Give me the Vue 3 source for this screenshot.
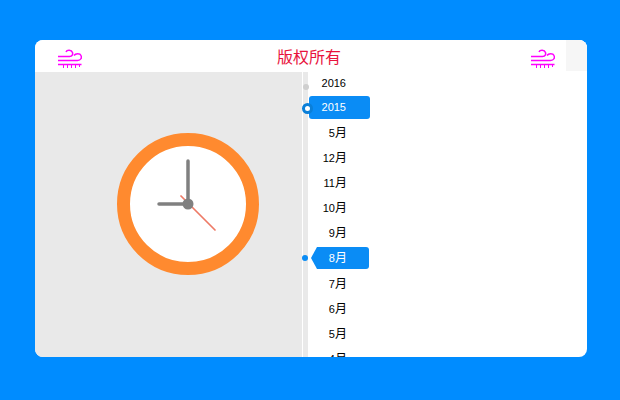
<script setup>
const rows = [
  { num: '2016', unit: '', kind: 'year' },
  { num: '2015', unit: '', kind: 'year year-on' },
  { num: '5', unit: '月', kind: '' },
  { num: '12', unit: '月', kind: '' },
  { num: '11', unit: '月', kind: '' },
  { num: '10', unit: '月', kind: '' },
  { num: '9', unit: '月', kind: '' },
  { num: '8', unit: '月', kind: 'month-on' },
  { num: '7', unit: '月', kind: '' },
  { num: '6', unit: '月', kind: '' },
  { num: '5', unit: '月', kind: '' },
  { num: '4', unit: '月', kind: '' },
]
</script>

<template>
  <div class="page">
    <div class="card">
      <header class="head">
        <svg class="wind" viewBox="0 0 24 20" fill="none" stroke="#f0f" stroke-width="1.500">
          <path d="M0 7.500H11.500C14.500 7.500 15 5 14.500 3.500C13.500.7 9 .5 8 3" />
          <path d="M0 11.500H19.500C23 11.500 24 8.500 23 6.500C22 4 17.500 4 16 6.500" />
          <path d="M0 15.500H23.500" />
          <path d="M5.500 15V19M9.500 15V19M13.500 15V19M17.500 15V19M21.500 15V18" stroke-width="1" />
        </svg>
        <h1 class="title">版权所有</h1>
        <div class="head-right">
          <svg class="wind" viewBox="0 0 24 20" fill="none" stroke="#f0f" stroke-width="1.500">
            <path d="M0 7.500H11.500C14.500 7.500 15 5 14.500 3.500C13.500.7 9 .5 8 3" />
            <path d="M0 11.500H19.500C23 11.500 24 8.500 23 6.500C22 4 17.500 4 16 6.500" />
            <path d="M0 15.500H23.500" />
            <path d="M5.500 15V19M9.500 15V19M13.500 15V19M17.500 15V19M21.500 15V18" stroke-width="1" />
          </svg>
          <span class="corner"></span>
        </div>
      </header>
      <div class="body">
        <section class="clock-pane">
          <svg class="clock" viewBox="0 0 142 142">
            <circle cx="71" cy="71" r="64.500" fill="#fff" stroke="#ff8a2f" stroke-width="13" />
            <path d="M64 63L98 97" stroke="#ee7a66" stroke-width="1.700" stroke-linecap="round" />
            <path d="M71 71V28" stroke="#808080" stroke-width="3.500" stroke-linecap="round" />
            <path d="M71 71H42" stroke="#808080" stroke-width="3.500" stroke-linecap="round" />
            <circle cx="71" cy="71" r="5.500" fill="#808080" />
          </svg>
        </section>
        <section class="rail-pane">
          <span class="rail"></span>
          <ul class="list">
            <li v-for="(r, i) in rows" :key="i" class="row" :class="r.kind">
              <span class="tag"><span class="num">{{ r.num }}</span>{{ r.unit }}</span>
            </li>
          </ul>
        </section>
      </div>
    </div>
  </div>
</template>

<style>
html, body { margin: 0; background: #008cff; }
</style>

<style scoped>
.page {
  width: 620px;
  height: 400px;
  box-sizing: border-box;
  padding: 40px 33px 43px 35px;
  background: #008cff;
  overflow: hidden;
}
.card {
  height: 100%;
  background: #fff;
  border-radius: 8px;
  overflow: hidden;
  display: flex;
  flex-direction: column;
  font-family: "Liberation Sans", "Noto Sans CJK SC", sans-serif;
}
.head {
  height: 32px;
  flex: none;
  display: flex;
  justify-content: space-between;
  padding-left: 23px;
  position: relative;
  background: #fff;
}
.wind { width: 24px; height: 20px; display: block; margin-top: 9px; flex: none; }
.title {
  position: absolute;
  left: 0;
  right: 0;
  top: 8px;
  margin: 0;
  text-align: center;
  font-size: 16px;
  line-height: 20px;
  font-weight: 400;
  color: #e8133c;
  padding-right: 4px;
}
.head-right {
  display: flex;
  gap: 11px;
  height: 100%;
}
.corner {
  display: block;
  width: 21px;
  height: 31px;
  background: #f6f6f6;
}
.body {
  flex: 1;
  display: flex;
  min-height: 0;
}
.clock-pane {
  width: 267px;
  flex: none;
  background: #e9e9e9;
  display: flex;
  align-items: center;
  justify-content: center;
  padding: 0 0 21px 39px;
  box-sizing: border-box;
}
.clock { width: 142px; height: 142px; display: block; }
.rail-pane {
  flex: 1;
  display: flex;
  position: relative;
  padding-left: 1px;
  min-width: 0;
}
.rail { width: 5px; flex: none; background: #e9e9e9; }
.list {
  list-style: none;
  margin: -1px 0 0;
  padding: 0 0 0 1px;
  width: 61px;
}
.row {
  height: 25px;
  font-size: 12px;
  line-height: 25px;
  color: #000;
  text-align: right;
  position: relative;
}
.tag { display: block; padding-right: 23px; }
.num { font-size: 11px; }
.year .tag { padding-right: 24px; }
.year-on .tag, .month-on .tag {
  color: #fff;
  background: #0a8cf5;
  border-radius: 3px;
}
.year-on .tag {
  height: 23px;
  line-height: 23px;
}
.month-on .tag {
  height: 22px;
  line-height: 22px;
  margin-top: 1px;
  margin-left: 2px;
  margin-right: 1px;
  padding-right: 22px;
  clip-path: polygon(0 50%, 6px 0, 100% 0, 100% 100%, 6px 100%);
}
.year::before, .month-on::before {
  content: "";
  position: absolute;
  border-radius: 50%;
  box-sizing: border-box;
}
.year::before {
  left: -6px; top: 13px; width: 6px; height: 6px; background: #cfcfcf;
}
.year.year-on::before {
  left: -7px; top: 7px; width: 11px; height: 11px; background: #fff; border: 3px solid #0a7fd8;
}
.month-on::before {
  left: -7px; top: 8px; width: 6px; height: 6px; background: #0a8cf5;
}
</style>
